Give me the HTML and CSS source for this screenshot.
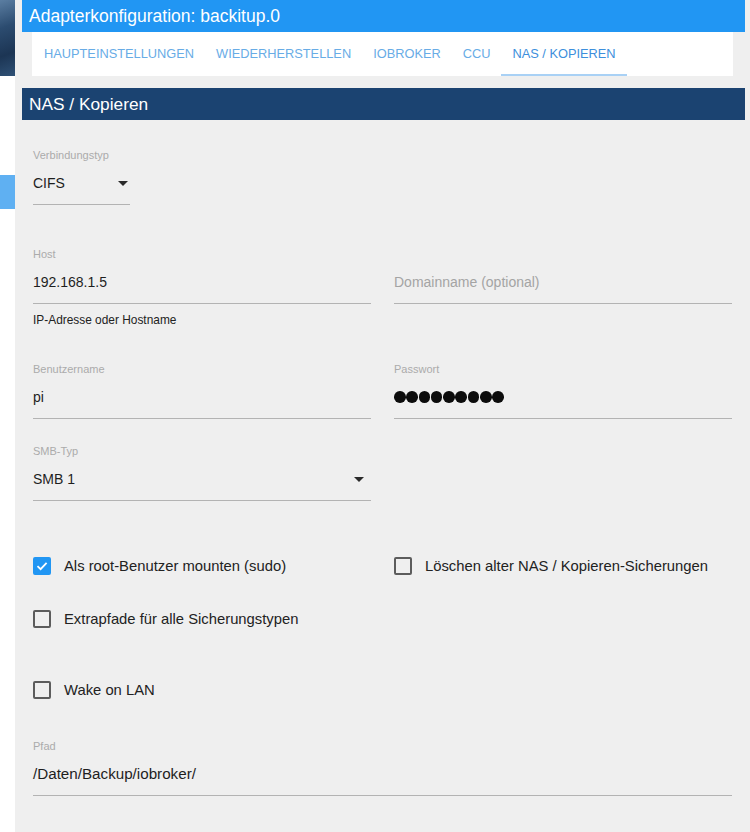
FILE: index.html
```html
<!DOCTYPE html>
<html>
<head>
    <title>Adapterkonfiguration: backitup.0</title>
    <link rel="stylesheet" href="styles.css">
</head>
<body>
    <div class="sidebar">
        <div class="sidebar-logo"></div>
        <div class="sidebar-item"></div>
    </div>
    <div class="main">
        <div class="title-bar">Adapterkonfiguration: backitup.0</div>
        <div class="tabs">
            <div class="tab">Haupteinstellungen</div>
            <div class="tab">Wiederherstellen</div>
            <div class="tab">ioBroker</div>
            <div class="tab">CCU</div>
            <div class="tab active">NAS / Kopieren</div>
        </div>
        <div class="section-header">NAS / Kopieren</div>

        <div class="form">
            <div class="row">
                <div class="field field-narrow">
                    <div class="label">Verbindungstyp</div>
                    <div class="value">CIFS<span class="arrow arrow-tight"></span></div>
                </div>
            </div>

            <div class="row row-host">
                <div>
                    <div class="field">
                        <div class="label">Host</div>
                        <div class="value">192.168.1.5</div>
                    </div>
                    <div class="helper">IP-Adresse oder Hostname</div>
                </div>
                <div class="field">
                    <div class="label"></div>
                    <div class="value placeholder">Domainname (optional)</div>
                </div>
            </div>

            <div class="row row-user">
                <div class="field">
                    <div class="label">Benutzername</div>
                    <div class="value">pi</div>
                </div>
                <div class="field">
                    <div class="label">Passwort</div>
                    <div class="value">
                        <div class="dots">
                            <span></span><span></span><span></span><span></span><span></span>
                            <span></span><span></span><span></span><span></span>
                        </div>
                    </div>
                </div>
            </div>

            <div class="row row-smb">
                <div class="field">
                    <div class="label">SMB-Typ</div>
                    <div class="value">SMB 1<span class="arrow"></span></div>
                </div>
            </div>

            <div class="row check-row check-first">
                <div class="check">
                    <span class="box checked">
                        <svg width="14" height="14" viewBox="0 0 14 14"><polyline points="2.5,7.2 5.6,10.2 11.6,3.8" fill="none" stroke="#fff" stroke-width="1.8"/></svg>
                    </span>
                    Als root-Benutzer mounten (sudo)
                </div>
                <div class="check">
                    <span class="box"></span>
                    Löschen alter NAS / Kopieren-Sicherungen
                </div>
            </div>

            <div class="row check-row check-second">
                <div class="check">
                    <span class="box"></span>
                    Extrapfade für alle Sicherungstypen
                </div>
            </div>

            <div class="row check-row check-third">
                <div class="check">
                    <span class="box"></span>
                    Wake on LAN
                </div>
            </div>

            <div class="row row-path">
                <div class="field field-wide">
                    <div class="label">Pfad</div>
                    <div class="value value-path">/Daten/Backup/iobroker/</div>
                </div>
            </div>
        </div>
    </div>
</body>
</html>
```

FILE: styles.css
```css
body {
    font-family: "Liberation Sans", Arial, sans-serif;
    display: flex;
    margin: 0;
    min-height: 100vh;
    background-color: #fff;
}
.sidebar {
    width: 15px;
    flex-shrink: 0;
}
.sidebar-logo {
    height: 76px;
    background: linear-gradient(160deg, #5b7ea2 0%, #2c4c70 35%, #1c3554 70%, #2f5176 100%);
}
.sidebar-item {
    margin-top: 99px;
    height: 34px;
    background: #5fb0f2;
}
.main {
    flex: 1;
    background: #efefef;
    padding: 0 5px 0 7px;
}
.title-bar {
    height: 32px;
    line-height: 32px;
    padding-left: 7px;
    background: #2196f3;
    color: #fff;
    font-size: 17.5px;
}
.tabs {
    display: flex;
    height: 44px;
    margin: 0 12px 0 10px;
    padding-left: 1px;
    background: #fff;
}
.tab {
    padding: 0 11px;
    line-height: 44px;
    font-size: 12.8px;
    text-transform: uppercase;
    color: #68ace6;
}
.tab.active {
    color: #3d8fdc;
    box-shadow: inset 0 -2px 0 #a9d1f5;
}
.section-header {
    margin-top: 12px;
    height: 32px;
    line-height: 32px;
    padding-left: 7px;
    background: #1b4371;
    color: #fff;
    font-size: 17.3px;
}
.form {
    padding: 27px 13px 0 11px;
}
.row {
    display: grid;
    grid-template-columns: 338px 338px;
    column-gap: 23px;
}
.row-host {
    margin-top: 41px;
}
.row-user {
    margin-top: 33px;
}
.row-smb {
    margin-top: 24px;
}
.row-path {
    margin-top: 36px;
}
.field-narrow {
    width: 97px;
}
.field-wide {
    grid-column: 1 / span 2;
}
.label {
    height: 16px;
    line-height: 16px;
    margin-bottom: 10px;
    font-size: 11px;
    color: #ababab;
}
.value {
    position: relative;
    height: 20px;
    line-height: 20px;
    padding-bottom: 11px;
    border-bottom: 1px solid #b3b3b3;
    font-size: 14px;
    color: #1e1e1e;
}
.value-path {
    font-size: 15.2px;
}
.placeholder {
    color: #a4a4a4;
}
.arrow {
    position: absolute;
    right: 7px;
    top: 8px;
    border-left: 5px solid transparent;
    border-right: 5px solid transparent;
    border-top: 5px solid #2a2a2a;
}
.arrow-tight {
    right: 2px;
}
.helper {
    margin-top: 8px;
    line-height: 16px;
    font-size: 11.9px;
    color: #222;
}
.dots {
    display: flex;
    gap: 0.7px;
    padding-top: 4px;
}
.dots span {
    width: 11.6px;
    height: 11.6px;
    border-radius: 50%;
    background: #0c0c0c;
}
.check {
    display: flex;
    align-items: center;
    gap: 13px;
    height: 24px;
    font-size: 14.8px;
    color: #222;
}
.box {
    box-sizing: border-box;
    width: 18px;
    height: 18px;
    border: 2px solid #5c5c5c;
    border-radius: 2px;
    display: flex;
    align-items: center;
    justify-content: center;
}
.box.checked {
    background: #2196f3;
    border-color: #2196f3;
}
.check-first {
    margin-top: 53px;
}
.check-second {
    margin-top: 29px;
}
.check-third {
    margin-top: 47px;
}
```
